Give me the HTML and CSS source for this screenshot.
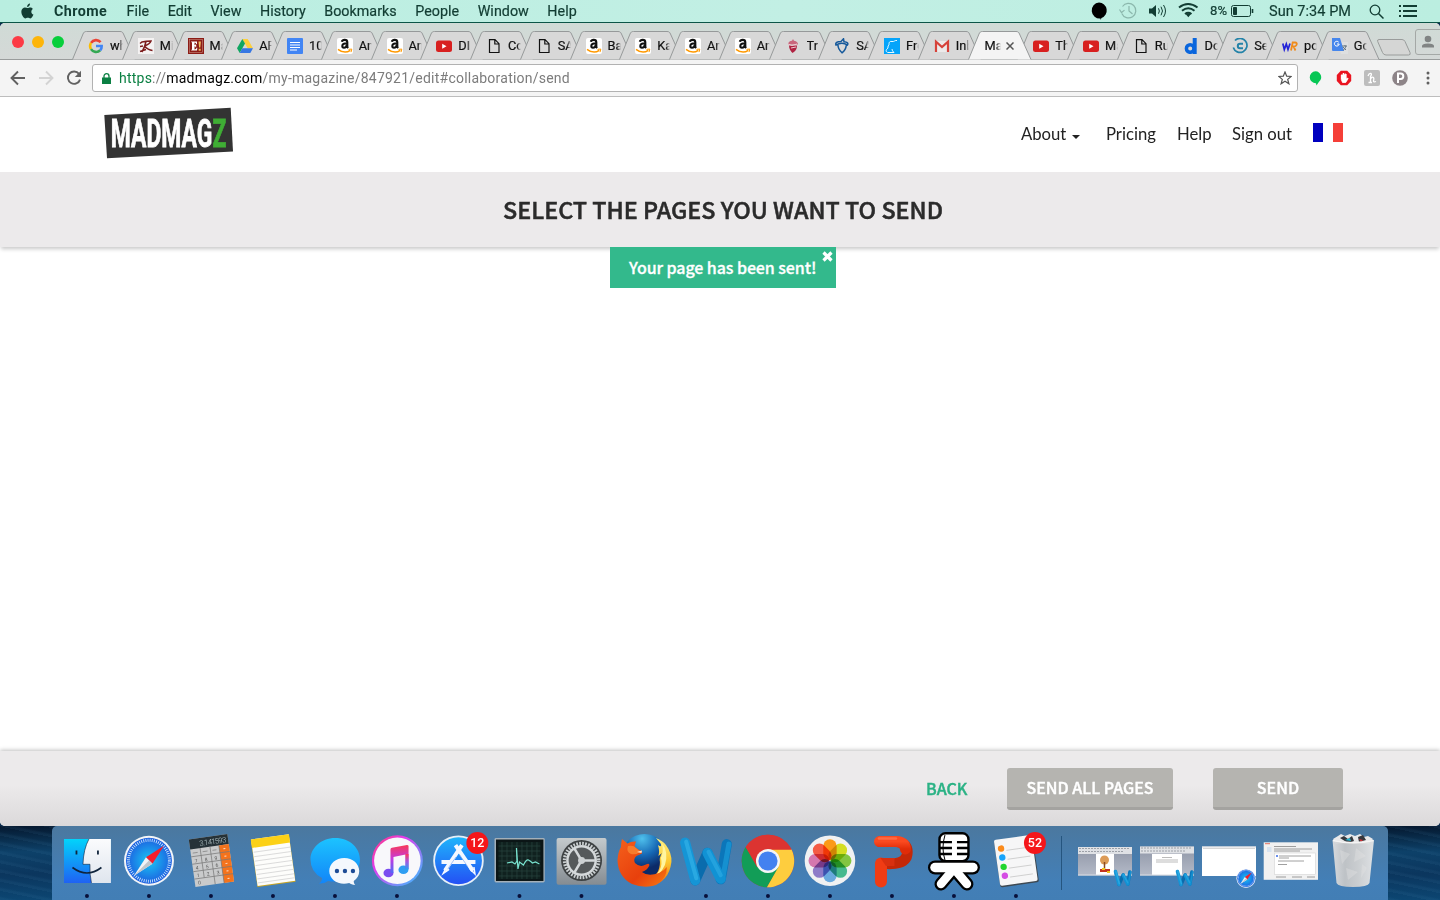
FILE: index.html
```html
<!DOCTYPE html>
<html lang="en">
<head>
<meta charset="utf-8">
<title>Madmagz</title>
<link rel="stylesheet" href="styles.css">
</head>
<body>
<svg class="defs" width="0" height="0" aria-hidden="true">
  <defs>
    <linearGradient id="gFinder" x1="0" y1="0" x2="0" y2="1"><stop offset="0" stop-color="#02d3fb"/><stop offset="1" stop-color="#1f62f3"/></linearGradient>
    <linearGradient id="gWhite" x1="0" y1="0" x2="0" y2="1"><stop offset="0" stop-color="#fbfbfd"/><stop offset="1" stop-color="#dfe5ee"/></linearGradient>
    <radialGradient id="gSafari"><stop offset="0" stop-color="#18c8f4"/><stop offset="1" stop-color="#1d5fe0"/></radialGradient>
    <linearGradient id="gMsg" x1="0" y1="0" x2="0" y2="1"><stop offset="0" stop-color="#1cc3ff"/><stop offset="1" stop-color="#1285f8"/></linearGradient>
    <linearGradient id="gTunes" x1="0" y1="0" x2="1" y2="1"><stop offset="0" stop-color="#ff3c6e"/><stop offset=".35" stop-color="#e03cf0"/><stop offset="1" stop-color="#2cc8ff"/></linearGradient>
    <linearGradient id="gNote" x1="0" y1="0" x2="0" y2="1"><stop offset="0" stop-color="#f83858"/><stop offset=".5" stop-color="#c43ae0"/><stop offset="1" stop-color="#4a6cf8"/></linearGradient>
    <linearGradient id="gNoteBlue" x1="0" y1="0" x2="0" y2="1"><stop offset="0" stop-color="#ff3658"/><stop offset=".5" stop-color="#a05ae0"/><stop offset="1" stop-color="#25a2f4"/></linearGradient>
    <linearGradient id="gStore" x1="0" y1="0" x2="0" y2="1"><stop offset="0" stop-color="#1fb4fb"/><stop offset="1" stop-color="#2450f4"/></linearGradient>
    <linearGradient id="gSteel" x1="0" y1="0" x2="0" y2="1"><stop offset="0" stop-color="#c4cacd"/><stop offset="1" stop-color="#858c92"/></linearGradient>
    <linearGradient id="gPpt" x1="0" y1="0" x2="0" y2="1"><stop offset="0" stop-color="#fb4a20"/><stop offset="1" stop-color="#e02c08"/></linearGradient>
    <radialGradient id="gGlobe" cx=".45" cy=".1" r=".8"><stop offset="0" stop-color="#4fc0ec"/><stop offset=".45" stop-color="#1567b4"/><stop offset=".8" stop-color="#0c2a68"/></radialGradient>
    <linearGradient id="gFox" x1="0" y1="0" x2="1" y2="1"><stop offset="0" stop-color="#f4601c"/><stop offset=".6" stop-color="#e8400c"/><stop offset="1" stop-color="#f87c10"/></linearGradient>
    <linearGradient id="gFlame" x1="0" y1="0" x2="0" y2="1"><stop offset="0" stop-color="#fff080"/><stop offset=".5" stop-color="#fcc830"/><stop offset="1" stop-color="#f06810"/></linearGradient>
    <linearGradient id="gTrash" x1="0" y1="0" x2="1" y2="0"><stop offset="0" stop-color="#dcdddf"/><stop offset=".3" stop-color="#c3c5c7"/><stop offset=".6" stop-color="#cfd0d1"/><stop offset="1" stop-color="#e4e5e6"/></linearGradient>
    <linearGradient id="gBar" x1="0" y1="0" x2="0" y2="1"><stop offset="0" stop-color="#8f96a6"/><stop offset="1" stop-color="#b4bac8"/></linearGradient>
  </defs>
  <symbol id="tab" viewBox="0 0 64 29"><path d="M.5 28.500L11 3C11.800 1.200 12.500 .5 14.500 .5H48C50 .5 50.700 1.200 51.500 3L63 28.500" stroke="#96999a"/></symbol>
  <symbol id="google" viewBox="0 0 16 16"><g fill="none" stroke-width="2.600"><path d="M12.600 4.200A6 6 0 0 0 3 4.900" stroke="#ea4335"/><path d="M3 4.900a6 6 0 0 0 0 6.200" stroke="#fbbc05"/><path d="M3 11.100a6 6 0 0 0 9.200 1.200" stroke="#34a853"/><path d="M12.200 12.300A6 6 0 0 0 13.700 8H8" stroke="#4285f4"/></g></symbol>
  <symbol id="script-r" viewBox="0 0 16 16"><rect width="16" height="16" fill="#f4f2f2"/><path d="M2 5.500L4 4Q8 3 13 3Q12 6 6.500 8M8 3.500Q7 9 4 14M2 8.500L5 8M6.500 8Q10 12 14.500 12.500M2 13.500L8 11.500" fill="none" stroke="#7c1c1c" stroke-width="1.500"/></symbol>
  <symbol id="enews" viewBox="0 0 16 16"><rect width="16" height="16" fill="#8c1c16"/><rect x="1.500" y="1.500" width="13" height="13" fill="none" stroke="#c88c80" stroke-width=".6"/><path d="M3.200 3.500H9V6H8.300Q8 4.500 6.500 4.500V7.300Q7.500 7.200 7.700 6.300H8.200V9.300H7.700Q7.500 8.300 6.500 8.200V11.500Q8.300 11.500 8.700 9.800H9.300L9 12.500H3.200V11.800H4V4.300H3.200z" fill="#fff"/><path d="M10.500 3.500h2.400l-.6 6h-1.200zM10.700 10.700h2v2h-2z" fill="#f3c060"/></symbol>
  <symbol id="drive" viewBox="0 0 16 16"><path d="M5.300 1h5.400L16 10.200h-5.300z" fill="#fdcf3c"/><path d="M5.300 1L8 5.600 2.700 15 0 10.300z" fill="#11a661"/><path d="M5.300 10.200H16L13.300 15H2.700z" fill="#3777e3"/></symbol>
  <symbol id="gdoc" viewBox="0 0 16 16"><rect width="16" height="16" rx="1" fill="#4285f4"/><path d="M3 4.500h10M3 7h10M3 9.500h10M3 12h7" stroke="#fff" stroke-width="1.200"/></symbol>
  <symbol id="amazon" viewBox="0 0 16 16"><rect width="16" height="16" rx="2" fill="#fff"/><path d="M4.800 3.700Q5.300 1.900 7.700 1.900 10.300 1.900 10.300 4.200V8.500Q10.300 9.300 11.200 10M10 5.300Q5.300 5.300 5.300 8 5.300 9.700 7 9.700 9.300 9.700 9.800 7" fill="none" stroke="#111" stroke-width="2.100"/><path d="M1 11.300Q7.500 16.300 13.300 12.400" fill="none" stroke="#f90" stroke-width="1.500"/><path d="M11.500 11.300l3.300-.2-.8 3" fill="none" stroke="#f90"/></symbol>
  <symbol id="youtube" viewBox="0 0 16 16"><rect y="2.500" width="16" height="11.500" rx="2.500" fill="#d8201f"/><path d="M6.200 5.700v5l4.300-2.500z" fill="#fff"/></symbol>
  <symbol id="page" viewBox="0 0 16 16"><path d="M3.500 1.700H9L13 5.700V14.500H3.500zM8.800 1.700V6H13" fill="none" stroke="#111" stroke-width="1.200"/></symbol>
  <symbol id="acorn-red" viewBox="0 0 16 16"><path d="M3 6.500c0-2.500 2-3.500 4-3.800l1-1.700 1 1.800c3 .5 4 2 4 3.700z" fill="#c9667c"/><path d="M4 7.500h8c0 4-2 6-4.500 7.500C5.500 13 4 11 4 7.500z" fill="#b02342"/><path d="M3 6l4 1.500L12 6M6 10l5-1" stroke="#eccbd1" fill="none"/></symbol>
  <symbol id="acorn-blue" viewBox="0 0 16 16"><path d="M2 7C1 4.500 3 3.500 7 3.500L9.500 .8 10 3.700C13.500 4 14.500 5 13.500 7Q8 3.500 2 7zM4 7C3.800 11 6 13 8 14.800 10.500 13 12 11 12.300 7" fill="none" stroke="#15599b" stroke-width="1.500"/></symbol>
  <symbol id="fresno" viewBox="0 0 16 16"><rect width="16" height="16" fill="#05a4fa"/><path d="M13 2.500C11 2 10 4 8 3.500 5 3 5 5 5 7 3 8 5 10 3 11 1 13 3 14.500 4 14.500h6q-2-1.500-2-3.500" fill="none" stroke="#e8faff" stroke-width="1"/></symbol>
  <symbol id="gmail" viewBox="0 0 16 16"><path d="M1 3h14v11H1z" fill="#eceaea"/><path d="M2 14V3.700l6 5.300 6-5.300V14" fill="none" stroke="#d6423a" stroke-width="2.200"/></symbol>
  <symbol id="letter-d" viewBox="0 0 16 16"><path d="M11.700 0V16" stroke="#0a66dd" stroke-width="4"/><circle cx="7.200" cy="10.500" r="3.800" fill="none" stroke="#0a66dd" stroke-width="3.500"/></symbol>
  <symbol id="copyc" viewBox="0 0 16 16"><path d="M3 2.500a7 7 0 1 1-1.700 7" fill="none" stroke="#2483a8" stroke-width="1.700"/><path d="M11 5.800H8a2.200 2.200 0 0 0 0 4.400h3" fill="none" stroke="#2483a8" stroke-width="2"/></symbol>
  <symbol id="wr" viewBox="0 0 16 16"><path d="M.8 5.500L2.300 11.500 4.300 6 6 11.500 8 5.500" fill="none" stroke="#2222d8" stroke-width="1.700"/><path d="M9 12.500L10.700 4.500H13Q15.500 4.700 14.500 7 14 8.500 11.500 8.500L13.500 12.500" fill="none" stroke="#ef8b1c" stroke-width="1.800"/></symbol>
  <symbol id="translate" viewBox="0 0 16 16"><path d="M6 4h10v12H9z" fill="#dedfe0"/><path d="M0 0h8l4 13H1a1 1 0 0 1-1-1z" fill="#4686ec"/><path d="M6.700 4.200A2.400 2.400 0 1 0 7.200 6H5" fill="none" stroke="#fff"/><path d="M10 8h5m-2-1v1m1 0c-1 3-2 3.500-3 4.500M11 9l3 3" stroke="#667680" fill="none"/></symbol>
  <symbol id="wordmark" viewBox="0 0 54 52"><g fill="none" stroke-width="10" stroke-linecap="round" stroke-linejoin="round"><path d="M42 42L48 7.500" stroke="#0b76ba"/><path d="M44 41L50 7.500" stroke="#1590d0" stroke-width="5"/><path d="M17 43L29 16" stroke="#0a6cad"/><path d="M29 16L42 41.500" stroke="#1192d4"/><path d="M7 6L17 43" stroke="#1595d6"/><path d="M8 5L18 41" stroke="#29a9e2" stroke-width="4"/><path d="M30 15L42 38" stroke="#23a2de" stroke-width="4"/></g></symbol>
  <symbol id="compass" viewBox="0 0 52 52"><circle cx="26" cy="26" r="25" fill="#f3f5f8"/><circle cx="26" cy="26" r="23" fill="url(#gSafari)"/><circle cx="26" cy="26" r="20.500" fill="none" stroke="#d8ecff" stroke-width="3" stroke-dasharray=".8 1.350"/><path d="M41 11L29.500 29L23 22.500z" fill="#f51d2c"/><path d="M11 41L29.500 29L23 22.500z" fill="#f2f3f6"/><path d="M11 41L29.500 29L26 25.800z" fill="#c2c6cc"/></symbol>
</svg>

<header class="menubar">
  <div class="menus">
    <svg class="apple" viewBox="0 0 14 17"><path d="M9.700 0c.1 1.900-1.400 3.600-3.100 3.600C6.400 1.900 8 .2 9.700 0zM12.800 5.800c-2.500 1.600-2.100 4.900.6 6-.6 1.700-1.900 4.200-3.300 4.200-1.100 0-1.500-.7-2.800-.7s-1.700.7-2.700.7C2.600 16-1.900 8.900 1.800 5.200 3.800 3.400 6 4.800 7.200 4.800c1.100 0 3.600-1.700 5.600 1z"/></svg>
    <b>Chrome</b><span>File</span><span>Edit</span><span>View</span><span>History</span><span>Bookmarks</span><span>People</span><span>Window</span><span>Help</span>
  </div>
  <svg class="status" viewBox="0 0 350 22" width="350" height="22">
    <g fill="none" stroke="#123d33">
      <path d="M9 2.500a8 8 0 0 1 2.500 15.500L10.500 20V18.500A8 8 0 0 1 9 2.500z" fill="#000" stroke="none"/>
      <g stroke="#8bb7ac" stroke-width="1.200"><path d="M32.500 6.500a7.300 7.300 0 1 1-.7 7"/><path d="M29.500 9.500l2 3 3-2.400M39 6v5l3.500 3"/></g>
      <path d="M59 8.500h3l4-3.500v12l-4-3.500h-3z" fill="#123d33" stroke="none"/><path d="M68.500 8.300q1.700 2.700 0 5.400M71 6.700q3 4.300 0 8.600M73.500 5q4 6 0 12"/>
      <g stroke-width="2"><path d="M89 7.500q9-7 18.500 0M92 10.800q6.200-5 12.500 0M95 14q3.200-2.500 6.500 0"/></g><path d="M95.800 14.200l2.500 3 2.500-3q-2.500-2-5 0z" fill="#123d33" stroke="none"/>
      <rect x="141.500" y="5.500" width="19" height="11" rx="2"/><path d="M143.500 7.500h3v7h-3z" fill="#123d33"/><path d="M162.500 9v4" stroke-width="1.600"/>
      <circle cx="285" cy="10" r="4.800" stroke-width="1.300"/><path d="M288.500 13.500l5 5" stroke-width="1.500"/>
      <path d="M309 6h2m2 0h14M309 11h2m2 0h14M309 16h2m2 0h14" stroke-width="1.900"/>
    </g>
    <g fill="#123d33" stroke="#123d33" stroke-width=".2" class="status-text"><text x="120" y="15.300" font-size="12.500" textLength="17" lengthAdjust="spacingAndGlyphs">8%</text><text x="179" y="16" font-size="14.500" textLength="82">Sun 7:34 PM</text></g>
  </svg>
</header>

<div class="window">
  <div class="tabstrip">
    <div class="lights"><i class="red"></i><i class="yellow"></i><i class="green"></i></div>
    <div class="tabs">
      <div class="tab"><svg class="shape"><use href="#tab"/></svg><svg class="fav"><use href="#google"/></svg><span>wh</span></div>
      <div class="tab"><svg class="shape"><use href="#tab"/></svg><svg class="fav"><use href="#script-r"/></svg><span>Mi</span></div>
      <div class="tab"><svg class="shape"><use href="#tab"/></svg><svg class="fav"><use href="#enews"/></svg><span>Ma</span></div>
      <div class="tab"><svg class="shape"><use href="#tab"/></svg><svg class="fav"><use href="#drive"/></svg><span>AP</span></div>
      <div class="tab"><svg class="shape"><use href="#tab"/></svg><svg class="fav"><use href="#gdoc"/></svg><span>10</span></div>
      <div class="tab"><svg class="shape"><use href="#tab"/></svg><svg class="fav"><use href="#amazon"/></svg><span>Am</span></div>
      <div class="tab"><svg class="shape"><use href="#tab"/></svg><svg class="fav"><use href="#amazon"/></svg><span>Am</span></div>
      <div class="tab"><svg class="shape"><use href="#tab"/></svg><svg class="fav"><use href="#youtube"/></svg><span>DI</span></div>
      <div class="tab"><svg class="shape"><use href="#tab"/></svg><svg class="fav"><use href="#page"/></svg><span>Co</span></div>
      <div class="tab"><svg class="shape"><use href="#tab"/></svg><svg class="fav"><use href="#page"/></svg><span>SA</span></div>
      <div class="tab"><svg class="shape"><use href="#tab"/></svg><svg class="fav"><use href="#amazon"/></svg><span>Ba</span></div>
      <div class="tab"><svg class="shape"><use href="#tab"/></svg><svg class="fav"><use href="#amazon"/></svg><span>Ka</span></div>
      <div class="tab"><svg class="shape"><use href="#tab"/></svg><svg class="fav"><use href="#amazon"/></svg><span>Am</span></div>
      <div class="tab"><svg class="shape"><use href="#tab"/></svg><svg class="fav"><use href="#amazon"/></svg><span>Am</span></div>
      <div class="tab"><svg class="shape"><use href="#tab"/></svg><svg class="fav"><use href="#acorn-red"/></svg><span>Tr</span></div>
      <div class="tab"><svg class="shape"><use href="#tab"/></svg><svg class="fav"><use href="#acorn-blue"/></svg><span>SA</span></div>
      <div class="tab"><svg class="shape"><use href="#tab"/></svg><svg class="fav"><use href="#fresno"/></svg><span>Fre</span></div>
      <div class="tab"><svg class="shape"><use href="#tab"/></svg><svg class="fav"><use href="#gmail"/></svg><span>Inb</span></div>
      <div class="tab active"><svg class="shape"><use href="#tab"/></svg><span>Ma</span><svg class="close" viewBox="0 0 8 8"><path d="M.5.5l7 7M7.500.5l-7 7" stroke="#555" stroke-width="1.500"/></svg></div>
      <div class="tab"><svg class="shape"><use href="#tab"/></svg><svg class="fav"><use href="#youtube"/></svg><span>Th</span></div>
      <div class="tab"><svg class="shape"><use href="#tab"/></svg><svg class="fav"><use href="#youtube"/></svg><span>Ma</span></div>
      <div class="tab"><svg class="shape"><use href="#tab"/></svg><svg class="fav"><use href="#page"/></svg><span>Ru</span></div>
      <div class="tab"><svg class="shape"><use href="#tab"/></svg><svg class="fav"><use href="#letter-d"/></svg><span>Do</span></div>
      <div class="tab"><svg class="shape"><use href="#tab"/></svg><svg class="fav"><use href="#copyc"/></svg><span>Se</span></div>
      <div class="tab"><svg class="shape"><use href="#tab"/></svg><svg class="fav"><use href="#wr"/></svg><span>po</span></div>
      <div class="tab"><svg class="shape"><use href="#tab"/></svg><svg class="fav"><use href="#translate"/></svg><span>Go</span></div>
    </div>
    <svg class="newtab" viewBox="0 0 34 17"><path d="M2 .5H25q2 0 3 2l5 11q1 2.500-1.500 2.500H9q-2.500 0-3.500-2.500L.7 2.500Q0 .5 2 .5z" fill="#d5d6d5" stroke="#999c9b"/></svg>
    <div class="profile"><svg viewBox="0 0 14 14"><circle cx="7" cy="4" r="3.300"/><path d="M1 12.500V11q0-2.500 6-2.500t6 2.500v1.500z"/></svg></div>
  </div>

  <div class="toolbar">
    <div class="navicons">
      <svg viewBox="0 0 16 16"><path d="M15 8H2M8 1.500L1.500 8 8 14.500" fill="none" stroke="#616161" stroke-width="1.900"/></svg>
      <svg viewBox="0 0 16 16"><path d="M1 8H14M8 1.500L14.500 8 8 14.500" fill="none" stroke="#d3d3d3" stroke-width="1.900"/></svg>
      <svg viewBox="0 0 16 16"><path d="M13 3.800A6.200 6.200 0 1 0 14 9.600" fill="none" stroke="#616161" stroke-width="1.900"/><path d="M15 .8V7H8.800z" fill="#616161"/></svg>
    </div>
    <div class="omnibox">
      <svg class="lock" viewBox="0 0 9 11"><path d="M0 4.500h9v6.500H0z" fill="#0b8043"/><path d="M2 5V3.200a2.500 2.500 0 0 1 5 0V5" fill="none" stroke="#0b8043" stroke-width="1.300"/></svg>
      <span class="url"><span class="scheme">https</span>://<span class="host">madmagz.com</span>/my-magazine/847921/edit#collaboration/send</span>
      <svg class="star" viewBox="0 0 14 14"><path d="M7 1l1.700 4.200 4.500.3-3.500 2.900 1.200 4.400L7 10.300l-3.900 2.500 1.200-4.400L.8 5.500l4.500-.3z" fill="none" stroke="#555" stroke-width="1.200"/></svg>
    </div>
    <div class="exts">
      <svg viewBox="0 0 16 16"><path d="M7.500 1.200a6 6 0 0 1 3.500 10.600L8.500 15.500 8 13.200A6 6 0 0 1 7.500 1.200z" fill="#06c755"/></svg>
      <svg viewBox="0 0 16 16"><path d="M4.800.8h6.400l4 4.200v6l-4 4.200H4.800L.8 11V5z" fill="#ea1420"/><path d="M5.300 5v4.500l1.200 3h3.200l2.500-4-1.200-.3-.8 1V4" fill="#fff" stroke="#fff" stroke-width=".8"/><path d="M5.800 9V4.500M7.400 8V3M9.200 8V3.500" stroke="#fff" stroke-width="1.300"/></svg>
      <svg viewBox="0 0 16 16"><rect width="16" height="16" rx="2" fill="#bdbdbd"/><path d="M4 6Q5 3 7 3.500 8 4.500 6.500 6.500V12.500M6.500 9Q8 6.500 9.500 7.500 10.300 8.500 9.500 11 9.500 12.500 12 11.500M4.500 12.500h3.500" fill="none" stroke="#fff" stroke-width="1.300"/></svg>
      <svg viewBox="0 0 16 16"><circle cx="8" cy="8" r="7.800" fill="#8d8488"/><path d="M6 13V3.500h2.700q2.600 0 2.600 2.700T8.700 9H6" fill="none" stroke="#fff" stroke-width="2"/></svg>
      <svg viewBox="0 0 16 16"><g fill="#606060"><circle cx="8" cy="3" r="1.500"/><circle cx="8" cy="8" r="1.500"/><circle cx="8" cy="13" r="1.500"/></g></svg>
    </div>
  </div>

  <div class="site-header">
    <svg class="logo" viewBox="0 0 130 52"><path d="M.3 8L126.700.8 129 44.500 3 51.200z" fill="#333"/><text class="logo-text" x="6.800" y="39.500" textLength="115.500" lengthAdjust="spacingAndGlyphs" fill="#fff" stroke="#fff">MADMAG<tspan fill="#3fae35" stroke="#3fae35">Z</tspan></text></svg>
    <nav class="nav">
      <a class="about">About <i class="caret"></i></a><a class="pricing">Pricing</a><a class="help">Help</a><a class="signout">Sign out</a>
      <span class="flag"><i class="blue"></i><i class="white"></i><i class="redband"></i></span>
    </nav>
  </div>
  <div class="titlebar"><h1>SELECT THE PAGES YOU WANT TO SEND</h1></div>
  <main class="content">
    <div class="alert">Your page has been sent!<svg class="dismiss" viewBox="0 0 11 11"><path d="M1.500 1.500l8 8M9.500 1.500l-8 8" stroke="#fff" stroke-width="3.200"/></svg></div>
  </main>
  <footer class="actions"><a class="back">BACK</a><button class="btn all">SEND ALL PAGES</button><button class="btn send">SEND</button></footer>
</div>

<div class="desktop">
  <div class="dock">
    <div class="apps">
      <svg viewBox="0 0 62 74"><path d="M8 13h47v44H8z" fill="url(#gFinder)"/><path d="M33 13Q27.500 23 27 38.300H34Q33.500 48 35.500 57H55V13z" fill="url(#gWhite)"/><path d="M20.500 24.500v4M42 24.500v4" stroke="#10243c" stroke-width="1.800"/><path d="M33 13Q27.500 23 27 38.300H34Q33.500 48 35.500 57" fill="none" stroke="#10243c" stroke-width=".6"/><path d="M16.500 41.500Q31 52.500 45.500 41.500" fill="none" stroke="#10243c" stroke-width="1.600"/><circle class="dot" cx="31" cy="70" r="2"/></svg>
      <svg viewBox="0 0 62 74"><use href="#compass" x="5" y="8.700" width="52" height="52"/><circle class="dot" cx="31" cy="70" r="2"/></svg>
      <svg viewBox="0 0 62 74"><g transform="translate(8.800 13.500) rotate(-8)"><rect width="39" height="48" fill="#c9cacb"/><rect width="39" height="10" fill="#263238"/><rect x="29" y="10" width="10" height="38" fill="#f4731c"/><path d="M0 17.500h39M0 25h39M0 32.500h39M0 40h39M10 10v30M20 10v38M29 10v38" stroke="#777" stroke-width=".7"/><g font-family="Roboto,sans-serif" font-size="5" fill="#555"><text x="3" y="24">7</text><text x="13" y="24">8</text><text x="23" y="24">9</text><text x="3" y="31">4</text><text x="13" y="31">5</text><text x="23" y="31">6</text><text x="3" y="38.500">1</text><text x="13" y="38.500">2</text><text x="23" y="38.500">3</text><text x="3" y="46">0</text></g><path d="M2 14h5m5 0h5m5 0h4" stroke="#888" stroke-width=".8"/><text x="10" y="8" font-family="Roboto,sans-serif" font-weight="300" font-size="7.500" textLength="27" fill="#bfd0d2">3.141593</text><path d="M33 14h2m-2 7.500h2M33 29h2m-2 7.500h2M33 44h2" stroke="#fde0c8"/></g><circle class="dot" cx="31" cy="70" r="2"/></svg>
      <svg viewBox="0 0 62 74"><g transform="translate(8.800 13.500) rotate(-8)"><rect y=".5" width="38.500" height="47.500" fill="#c7a526"/><rect x=".3" width="38" height="47" fill="#fdfdfb"/><rect width="38.500" height="8.500" fill="#fcd116"/><path d="M1 13h37M1 17.500h37M1 22h37M1 26.500h37M1 31h37M1 35.500h37M1 40h37M1 44h37" stroke="#d4d4d4" stroke-width=".8"/></g><circle class="dot" cx="31" cy="70" r="2"/></svg>
      <svg viewBox="0 0 62 74"><path d="M31.300 12C46 12 56 22 56 33.500S46 55.500 31 55.500Q27 55.500 24 55 20 58 15 57.500 18.500 55 18 52 6.500 46 6.500 33.500C6.500 22 17 12 31.300 12z" fill="url(#gMsg)"/><path d="M40.300 32c8.500 0 15 6 15 13 0 4.500-2 7.500-5.500 10 0 2 .5 3 1.500 4-3 0-4.500-1-6-2-10 3-20-3-20-12 0-7 6.500-13 15-13z" fill="#f4f8fd"/><g fill="#1e4c96"><circle cx="33" cy="45" r="2.200"/><circle cx="41" cy="45" r="2.200"/><circle cx="49" cy="45" r="2.200"/></g><circle class="dot" cx="31" cy="70" r="2"/></svg>
      <svg viewBox="0 0 62 74"><circle cx="31.400" cy="34.700" r="25.500" fill="url(#gTunes)"/><circle cx="31.400" cy="34.700" r="23.300" fill="#f8f8fb"/><ellipse cx="22.500" cy="47" rx="5" ry="4.300" fill="#7b4cf0"/><ellipse cx="37.500" cy="43.700" rx="5" ry="4.300" fill="#2f9ef2"/><path d="M24.500 46.500V23.500q0-1.500 1.500-1.800L41 19q1.600 0 1.600 1.300V43h-3V28.500L27.500 31V47z" fill="url(#gNote)"/><path d="M39.500 28h3.100v15.500h-3.100z" fill="url(#gNoteBlue)"/><circle class="dot" cx="31" cy="70" r="2"/></svg>
      <svg viewBox="0 0 62 74"><circle cx="30.500" cy="34.700" r="25.300" fill="#e7f0f8"/><circle cx="30.500" cy="34.700" r="23.500" fill="url(#gStore)"/><g stroke="#f5f8ff" stroke-width="4" fill="none"><path d="M13.500 36H47.500"/><path d="M34 19L17 44.500M27.500 19L45 45"/></g><path d="M18.500 41l-3.300 6.500 6-4M42 43l5 5-1-7" stroke="#f5f8ff" stroke-width="1.500" fill="none"/><path d="M28 31L20 42.500M31.500 28.500L40 41" stroke="#83abf3" stroke-width=".7"/><circle cx="49.400" cy="17" r="11" fill="#f5161a"/><text x="49.400" y="21.300" class="badge">12</text></svg>
      <svg viewBox="0 0 62 74"><rect x="5.500" y="12" width="50.300" height="44.500" rx="1.500" fill="#a4b0b9"/><rect x="7" y="13.500" width="47.500" height="41.500" fill="#0b1516"/><rect x="9.500" y="16" width="42" height="37" fill="#10211f"/><path d="M13 16v37M18 16v37M23 16v37M28 16v37M33 16v37M38 16v37M43 16v37M48 16v37M9.500 20h42M9.500 25h42M9.500 30h42M9.500 35h42M9.500 40h42M9.500 45h42M9.500 50h42" stroke="#28453f" stroke-width=".7"/><path d="M18 37l5-1 3 2 2-3L27.500 22 29 43l1.500-7 4 3q3-6 5-5t4 3l3-1 4 2" fill="none" stroke="#79e3cf" stroke-width="1.200"/><circle class="dot" cx="30.500" cy="70" r="2"/></svg>
      <svg viewBox="0 0 62 74"><rect x="5.600" y="12" width="50" height="46.700" rx="2" fill="url(#gSteel)"/><circle cx="30.600" cy="34.500" r="20.500" fill="#3d4143"/><circle cx="30.600" cy="34.500" r="17" fill="none" stroke="#cbd0d2" stroke-width="3.500" stroke-dasharray="1.700 1.270"/><circle cx="30.600" cy="34.500" r="14.200" fill="#55595b" stroke="#d4d8da" stroke-width="2.500"/><path d="M30.600 34.500H44M30.600 34.500L23.500 22.500M30.600 34.500L23.500 46.500" stroke="#d4d8da" stroke-width="2.500"/><circle cx="30.600" cy="34.500" r="3.500" fill="#ccd0d2"/><circle class="dot" cx="30.500" cy="70" r="2"/></svg>
      <svg viewBox="0 0 62 74"><circle cx="31.500" cy="31.500" r="23.500" fill="url(#gGlobe)"/><path d="M43 12Q50 15 53 19 59 27 58.500 36 56 56 38 60L34 54Q47 50 47 36 46 32 49 27L45.500 30Q47 25 45 19 49 22 48 18z" fill="url(#gFlame)"/><path d="M49 17Q56 26 52 39 47 50 38 53 51 44 48 32 51 25 49 17z" fill="#fff5a0"/><path d="M9 13L14.500 17.500Q18.500 15 23 15.500L21.500 20Q23 23 28 24.500 29.500 25.500 29 27.500L23.500 30Q20 33 22 37 27 42 33 38.500 36 37 36.500 39 35 44 29 46 35 51 46 47 51 45 54 41 54 53 43 59 32 63 19 58 5 51 4.500 34 5 26 8 21 8 17 9 13z" fill="url(#gFox)"/><path d="M15 20q6-1 8 2l4.500 3.500Q24 29 18 28 13 26 15 20z" fill="#f87c2c"/><path d="M24 26l5-1.500-.5 2.500z" fill="#fde8d0"/><circle class="nodot" cx="31" cy="70" r="0"/></svg>
      <svg viewBox="0 0 62 74"><use href="#wordmark" x="3" y="10.500" width="55" height="53"/><circle class="dot" cx="31" cy="70" r="2"/></svg>
      <svg viewBox="0 0 62 74"><circle cx="31" cy="35" r="26.300" fill="#dc3431"/><path d="M8.700 21A26.300 26.300 0 0 0 30 61.300L42 41H20z" fill="#129d57"/><path d="M31 23.500H54.600A26.300 26.300 0 0 1 30 61.300L41.500 41z" fill="#fecd3e"/><path d="M31 23.500H54.600A26.300 26.300 0 0 0 8.700 21L20.800 41z" fill="#dc3431"/><circle cx="31" cy="35" r="12" fill="#f5f5f5"/><circle cx="31" cy="35" r="9.600" fill="#4381f0"/><circle class="dot" cx="31" cy="70" r="2"/></svg>
      <svg viewBox="0 0 62 74"><circle cx="31" cy="34.700" r="25.300" fill="#f0f1f2"/><g transform="translate(31 34.700)" class="petals"><rect x="-6.700" y="-21.500" width="13.400" height="21" rx="6.700" fill="#fb9a18"/><rect x="-6.700" y="-21.500" width="13.400" height="21" rx="6.700" fill="#d4dd22" transform="rotate(45)"/><rect x="-6.700" y="-21.500" width="13.400" height="21" rx="6.700" fill="#82c541" transform="rotate(90)"/><rect x="-6.700" y="-21.500" width="13.400" height="21" rx="6.700" fill="#45b98e" transform="rotate(135)"/><rect x="-6.700" y="-21.500" width="13.400" height="21" rx="6.700" fill="#69a9df" transform="rotate(180)"/><rect x="-6.700" y="-21.500" width="13.400" height="21" rx="6.700" fill="#8e7bc8" transform="rotate(225)"/><rect x="-6.700" y="-21.500" width="13.400" height="21" rx="6.700" fill="#d577ae" transform="rotate(270)"/><rect x="-6.700" y="-21.500" width="13.400" height="21" rx="6.700" fill="#f45b44" transform="rotate(315)"/></g><circle class="dot" cx="31" cy="70" r="2"/></svg>
      <svg viewBox="0 0 62 74"><path d="M19 15.500H34Q46.500 16 46.500 26T34 37.500L28 38" fill="none" stroke="#c42808" stroke-width="10.500" stroke-linecap="round"/><path d="M20 37.500V55.500" stroke="#f03c14" stroke-width="12" stroke-linecap="round"/><path d="M19.500 32h14v8H25z" fill="#d83010"/><path d="M18.500 15.500H35Q44 16 44.500 23" fill="none" stroke="url(#gPpt)" stroke-width="11" stroke-linecap="round"/><path d="M18 12.500H35" stroke="#ff6a42" stroke-width="2.500" stroke-linecap="round"/><circle class="dot" cx="31" cy="70" r="2"/></svg>
      <svg viewBox="0 0 62 74"><g fill="none" stroke-linecap="round"><g stroke="#000"><path d="M12 41.500H50" stroke-width="14"/><path d="M30 44L18 58M32 44L44 58" stroke-width="13"/></g><rect x="16.500" y="7.200" width="29" height="28" rx="6" fill="#fff" stroke="#000" stroke-width="2.400"/><path d="M12 41.500H50" stroke="#fff" stroke-width="9.500"/><path d="M29 45L18 58M33 45L44 58" stroke="#fff" stroke-width="8.500"/></g><path d="M17 16h12m5 0h12M17 22h12m5 0h12M17 28h12m5 0h12" stroke="#000" stroke-width="2.300"/><path d="M22 9q-4 13 0 25" fill="none" stroke="#000"/><circle class="dot" cx="31" cy="70" r="2"/></svg>
      <svg viewBox="0 0 62 74"><g transform="translate(8.800 14) rotate(-8)"><rect y="1" width="39" height="47" rx="2" fill="#3e4952"/><rect width="38" height="46.500" rx="2" fill="#f6f6f7"/><path d="M11 12h23M11 21h23M11 30h23M11 39h23" stroke="#c8c8c8" stroke-width=".8"/><circle cx="6" cy="9.500" r="3.200" fill="#fb8b1c"/><circle cx="6" cy="18.500" r="3.200" fill="#18a4fb"/><circle cx="6" cy="28" r="3.200" fill="#20d52e"/><circle cx="6" cy="37" r="3.200" fill="#d54ee4"/></g><circle cx="50" cy="17" r="11" fill="#f5161a"/><text x="50" y="21.300" class="badge">52</text><circle class="dot" cx="31" cy="70" r="2"/></svg>
    </div>
    <div class="divider"></div>
    <div class="minimized">
      <svg viewBox="0 0 62 74"><rect x="4" y="21" width="54" height="28.500" fill="url(#gBar)"/><rect x="4" y="21" width="54" height="7" fill="#dfe1e5"/><path d="M5 22.500h50M5 25.500h44" stroke="#9da1a8" stroke-dasharray="2 1"/><rect x="22" y="28" width="18" height="21" fill="#fff"/><path d="M4 49h54" stroke="#dadde2"/><circle cx="30.500" cy="34" r="4.500" fill="#dc9b58"/><path d="M30.500 36v7" stroke="#8b4a20" stroke-width="1.500"/><path d="M26 44.500h10" stroke="#c43420" stroke-width="3"/><path d="M28 43h3m2 3h3" stroke="#f1c31c" stroke-width="2"/><use href="#wordmark" x="39" y="43" width="19" height="19"/></svg>
      <svg viewBox="0 0 62 74"><rect x="4" y="20.500" width="54" height="29" fill="url(#gBar)"/><rect x="4" y="20.500" width="54" height="7" fill="#dfe1e5"/><path d="M5 22h50M5 25h44" stroke="#9da1a8" stroke-dasharray="2 1"/><rect x="16" y="28" width="30" height="21" fill="#fff"/><path d="M4 49h54" stroke="#dadde2"/><path d="M26 31.500h10M20 34h22M20 36h22" stroke="#aaa" stroke-width=".8"/><use href="#wordmark" x="39" y="43" width="19" height="19"/></svg>
      <svg viewBox="0 0 62 74"><rect x="4" y="20.500" width="54" height="29.500" fill="#fff"/><path d="M4 21h54" stroke="#d6d6da"/><path d="M5 22.500h52" stroke="#bbb" stroke-width=".6"/><use href="#compass" x="38" y="42.300" width="20" height="20"/></svg>
      <svg viewBox="0 0 62 74"><rect x="3.700" y="16.300" width="54.300" height="37.500" fill="#f1f1f1"/><path d="M5 17.700h5" stroke="#e07060"/><path d="M14 20.500h22M14 23h38M14 25h26" stroke="#888" stroke-width=".8"/><rect x="14.500" y="27" width="41" height="21.500" fill="#fff" stroke="#d4d4d4" stroke-width=".6"/><circle cx="17" cy="30" r="1" fill="#3768e8"/><path d="M19 30h32M19 32h10M18 35h26M18 38.500h9M16 51h10m6 0h10m5 0h8" stroke="#888" stroke-width=".8"/><rect x="7" y="21" width="4.500" height="5" fill="#d7e3f0"/></svg>
      <svg viewBox="0 0 62 74"><path d="M11 13l5-3 3-2 4 2 5-2 5 2 5-2 4 3 4-1 5 3-4 5H14z" fill="#e9e9ea"/><path d="M18 12l4-2 4 3 4-3 2 5-6 2zM36 11l5-2 3 5-7 2z" fill="#36383d"/><path d="M23 14l5-2 1 3z" fill="#26b4cf"/><path d="M37 13l4 1-2 2z" fill="#cc3035"/><path d="M10.500 14Q31 18 52 14L47.500 57Q46 61 31 61T14.500 57z" fill="url(#gTrash)" opacity=".96"/><path d="M11 14.500Q31 19 51.500 14.500" fill="none" stroke="#f4f4f4" stroke-width="1.500"/><path d="M18 24l10 4-8 10zM34 22l10 8-12 6zM24 42l12 4-10 8zM40 38l5 4-6 10z" fill="#e4e4e4" opacity=".35"/></svg>
    </div>
  </div>
</div>
</body>
</html>
```

FILE: styles.css
```css
* { box-sizing: border-box; }
body { margin: 0; width: 1440px; height: 900px; overflow: hidden; font-family: Roboto, sans-serif; display: flex; flex-direction: column; background: #0c2c4e; }
.defs { position: absolute; }
svg { display: block; flex: none; }

.menubar { height: 23px; flex: none; display: flex; justify-content: space-between; background: linear-gradient(90deg, #b9eee0, #c2efe4 55%, #bbeee0); border-bottom: 1px solid #0c5547; color: #123d33; padding: 0 0 0 21px; }
.menus { display: flex; align-items: center; gap: 18.5px; font-size: 14.3px; letter-spacing: .03px; -webkit-text-stroke: .2px #123d33; }
.menus b { letter-spacing: .45px; margin-right: .8px; -webkit-text-stroke: 0; }
.apple { width: 13px; height: 17px; margin-right: 1.5px; fill: #123d33; }
.status-text { font-family: Roboto, sans-serif; }

.window { height: 803px; flex: none; display: flex; flex-direction: column; background: #fff; border-radius: 5px; overflow: hidden; }
.tabstrip { height: 37px; flex: none; display: flex; background: linear-gradient(#d0dbd6, #d4d8d7); border-bottom: 1px solid #999c9c; }
.lights { width: 84px; flex: none; display: flex; gap: 8px; padding: 13px 0 0 12px; }
.lights i { width: 12px; height: 12px; border-radius: 50%; }
.red { background: #fc3b46; }
.yellow { background: #fdb50a; }
.green { background: #07cf3c; }
.tabs { display: flex; width: 1293.5px; flex: none; }
.tab { position: relative; width: 49.75px; flex: none; padding: 15px 0 0 4px; display: flex; gap: 6px; font-size: 12.8px; line-height: 16px; color: #111; -webkit-text-stroke: .2px #111; }
.shape { position: absolute; left: -12px; top: 8px; width: 64px; height: 29px; fill: #d8d8d8; z-index: 0; }
.fav { position: relative; z-index: 1; width: 16px; height: 16px; }
.tab span { position: relative; z-index: 1; width: 13px; overflow: hidden; white-space: nowrap; -webkit-mask-image: linear-gradient(90deg, #000 70%, transparent); mask-image: linear-gradient(90deg, #000 70%, transparent); }
.tab.active { padding-left: 5px; gap: 5px; }
.active .shape { fill: #f4f4f4; z-index: 1; }
.tab.active span { width: 16px; z-index: 2; }
.close { position: relative; z-index: 2; width: 8px; height: 8px; margin-top: 4px; }
.newtab { width: 34px; height: 17px; margin: 16px 0 0 -1px; }
.profile { width: 30px; height: 26px; margin: 6px 0 0 4px; flex: none; border: 1px solid #a4a8a6; border-radius: 3px; padding: 5px 5px; }
.profile svg { width: 14px; height: 14px; fill: #818484; }

.toolbar { height: 37px; flex: none; display: flex; align-items: center; background: #f4f4f4; border-bottom: 1px solid #bdbdbd; padding-left: 10px; }
.navicons { display: flex; gap: 12px; width: 82px; }
.navicons svg { width: 16px; height: 16px; }
.omnibox { width: 1206px; height: 28px; flex: none; background: #fff; border: 1px solid #b2b2b2; border-radius: 3px; display: flex; align-items: center; padding: 0 5px 0 9px; }
.lock { width: 9px; height: 11px; }
.url { margin-left: 8px; flex: 1; font-size: 14px; letter-spacing: .23px; color: #7c7c7c; }
.scheme { color: #0b8043; }
.host { color: #000; }
.star { width: 14px; height: 14px; }
.exts { display: flex; gap: 12px; padding-left: 10px; }
.exts svg { width: 16px; height: 16px; }

.site-header { height: 75px; flex: none; display: flex; justify-content: space-between; align-items: flex-start; padding: 10px 97px 0 104px; }
.logo { width: 130px; height: 52px; }
.logo-text { font: bold 38px Roboto, sans-serif; stroke-width: .8px; }
.nav { display: flex; padding-top: 16px; font: 16.7px/22px Lato, sans-serif; color: #222; white-space: nowrap; }
.about { width: 85px; }
.pricing { width: 71px; }
.help { width: 55px; }
.signout { width: 81px; }
.caret { display: inline-block; border: 4px solid transparent; border-top-color: #222; border-bottom: 0; margin-left: 1px; vertical-align: 1px; }
.flag { display: flex; width: 30px; height: 19px; }
.flag i { width: 10px; }
.blue { background: #0000bf; }
.redband { background: #f53f38; }

.titlebar { height: 75px; flex: none; background: #eceaeb; box-shadow: 0 3px 4px -1px rgba(0,0,0,.22); padding-left: 6px; z-index: 1; }
h1 { margin: 0; text-align: center; font: 500 23.3px/75px "Noto Sans CJK SC", sans-serif; color: #2b2b2b; white-space: nowrap; -webkit-text-stroke: .5px #2b2b2b; }
.content { flex: 1; display: flex; justify-content: center; align-items: flex-start; padding-left: 6px; z-index: 2; }
.alert { position: relative; width: 226px; height: 41px; background: #33b98c; color: #fff; padding-left: 19px; font: 500 16px/41px "Noto Sans CJK SC", sans-serif; letter-spacing: -.08px; white-space: nowrap; -webkit-text-stroke: .3px #fff; }
.dismiss { position: absolute; right: 3px; top: 4px; width: 11px; height: 11px; }
.actions { height: 75px; flex: none; display: flex; align-items: flex-start; justify-content: flex-end; padding: 17px 97px 0 0; background: linear-gradient(#eceaeb 45%, #dbd9da); box-shadow: 0 -1px 4px rgba(0,0,0,.25); font: 500 16px/41px "Noto Sans CJK SC", sans-serif; }
.back { color: #2bb285; margin-right: 39.5px; -webkit-text-stroke: .4px #2bb285; }
.btn { height: 42px; padding: 0; border: 0; border-radius: 3px; background: #b5b4b0; border-bottom: 3px solid #a4a3a0; color: #fff; font: inherit; line-height: 39px; white-space: nowrap; -webkit-text-stroke: .4px #fff; }
.all { width: 166px; margin-right: 40px; }
.send { width: 130px; }

.desktop { height: 74px; flex: none; padding: 0 52px; background: repeating-linear-gradient(12deg, rgba(90,150,190,.08) 0 2px, transparent 4px 9px), linear-gradient(#051930, #0d4169 35%, #0b365e 65%, #0c4672); }
.dock { height: 74px; display: flex; padding-left: 4px; background: linear-gradient(#4b789f, #437fb7 75%, #427eb5); border-radius: 5px 5px 0 0; }
.apps, .minimized { display: flex; }
.apps svg { width: 61.93px; height: 74px; }
.minimized svg { width: 62px; height: 74px; }
.divider { width: 1px; height: 54px; margin: 10px 12px 0 14px; background: #25557f; }
.dot { fill: #08103a; }
.badge { font: 500 12.5px Roboto, sans-serif; fill: #fff; text-anchor: middle; }
.petals { isolation: isolate; }
.petals rect { mix-blend-mode: multiply; }
```
